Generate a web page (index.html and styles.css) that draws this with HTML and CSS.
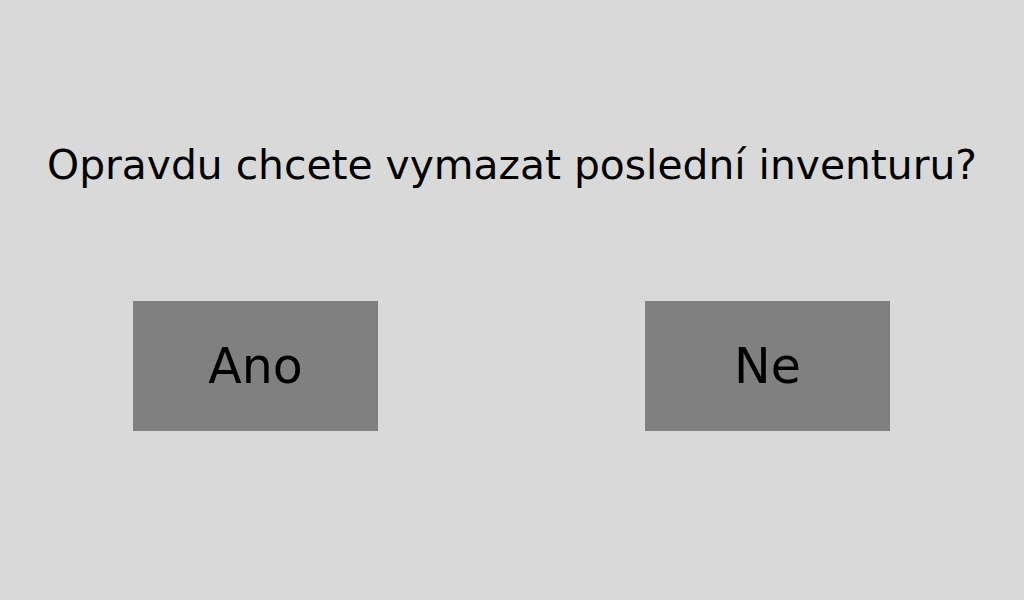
FILE: index.html
```html
<!DOCTYPE html>
<html lang="cs">
<head>
<meta charset="utf-8">
<link rel="stylesheet" href="styles.css">
</head>
<body>
<main class="dialog">
  <h1 class="question">Opravdu chcete vymazat poslední inventuru?</h1>
  <div class="actions">
    <div class="slot"><button class="btn">Ano</button></div>
    <div class="slot"><button class="btn">Ne</button></div>
  </div>
</main>
</body>
</html>
```

FILE: styles.css
```css
html, body {
  margin: 0;
  padding: 0;
}
body {
  width: 1024px;
  height: 600px;
  background: #d9d9d9;
  font-family: "DejaVu Sans", sans-serif;
  color: #000;
  overflow: hidden;
}
.dialog {
  display: flex;
  flex-direction: column;
  padding-top: 141px;
}
.question {
  margin: 0;
  height: 48px;
  font-size: 40.8px;
  font-weight: normal;
  text-align: center;
  line-height: normal;
}
.actions {
  display: grid;
  grid-template-columns: 1fr 1fr;
  margin-top: 112px;
}
.slot {
  display: flex;
  justify-content: center;
  padding-right: 1px;
}
.btn {
  width: 245px;
  height: 130px;
  background: #808080;
  border: none;
  padding: 0;
  margin: 0;
  font-family: "DejaVu Sans", sans-serif;
  font-size: 49px;
  color: #000;
  display: flex;
  align-items: center;
  justify-content: center;
}
```
